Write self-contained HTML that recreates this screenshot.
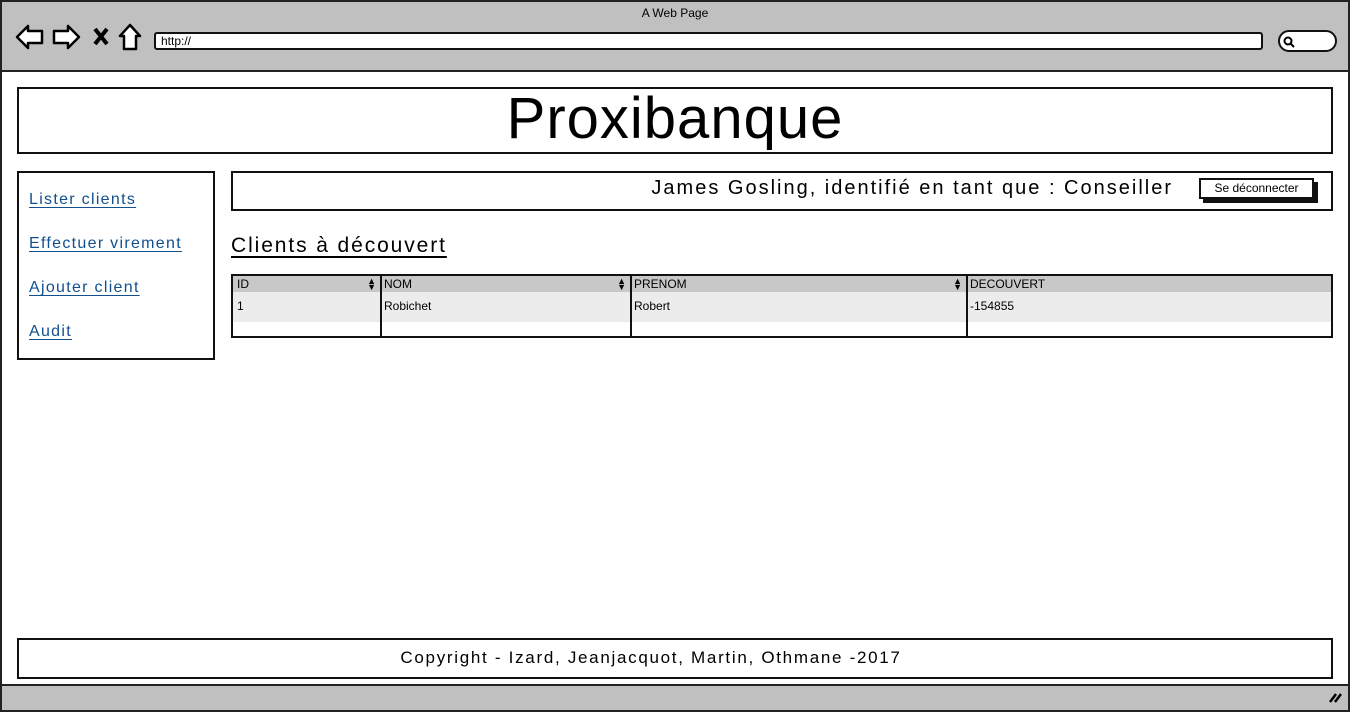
<!DOCTYPE html>
<html><head><meta charset="utf-8"><style>
*{margin:0;padding:0;box-sizing:border-box}
body{width:1350px;height:712px;overflow:hidden;background:#fff;font-family:"Liberation Sans",sans-serif;color:#000;position:relative}
.a{position:absolute}
.box{position:absolute;border:2px solid #111;background:#fff}
.lnk{position:absolute;left:29px;font-size:16px;color:#124f8f;text-decoration:underline;text-underline-offset:3px;letter-spacing:1.3px}
.th{position:absolute;top:0;height:16px;font-size:12px;line-height:16px;padding-left:5px}
.td{position:absolute;top:23px;font-size:12px;padding-left:5px}
.ar{position:absolute;right:4px;top:2px;font-size:9px;line-height:6px}
</style></head><body>
<div class="a" style="left:0;top:0;width:1350px;height:712px;border:2px solid #222"></div>
<div class="a" style="left:2px;top:2px;width:1346px;height:70px;background:#c0c0c0;border-bottom:2px solid #222"></div>
<div class="a" style="left:0;top:6px;width:1350px;text-align:center;font-size:12px">A Web Page</div>
<svg class="a" style="left:14px;top:22px" width="135" height="30" viewBox="0 0 135 30">
<path d="M3 15 L14 4 L14 9 L28 9 L28 21 L14 21 L14 26 Z" fill="#fff" stroke="#000" stroke-width="2.5" stroke-linejoin="round"/>
<path d="M65 15 L54 4 L54 9 L40 9 L40 21 L54 21 L54 26 Z" fill="#fff" stroke="#000" stroke-width="2.5" stroke-linejoin="round"/>
<path d="M81 7 L93 22 M93 7 L81 22" stroke="#000" stroke-width="4"/>
<path d="M116 3 L106 14 L110 14 L110 27 L122 27 L122 14 L126 14 Z" fill="#fff" stroke="#000" stroke-width="2.5" stroke-linejoin="round"/>
</svg>
<div class="a" style="left:154px;top:32px;width:1109px;height:18px;background:#fff;border:2px solid #111;border-radius:3px;font-size:12px;line-height:14px;padding-left:5px">http://</div>
<div class="a" style="left:1278px;top:30px;width:59px;height:22px;background:#fff;border:2px solid #111;border-radius:11px"></div>
<svg class="a" style="left:1282px;top:35px" width="14" height="14"><circle cx="6" cy="6" r="3.5" fill="none" stroke="#000" stroke-width="2"/><path d="M8 8 L12 12" stroke="#000" stroke-width="2"/></svg>
<div class="box" style="left:17px;top:87px;width:1316px;height:67px"></div>
<div class="a" style="left:0;top:85px;width:1350px;text-align:center;font-size:58px;letter-spacing:1px">Proxibanque</div>
<div class="box" style="left:17px;top:171px;width:198px;height:189px"></div>
<div class="lnk" style="top:191px">Lister clients</div>
<div class="lnk" style="top:235px">Effectuer virement</div>
<div class="lnk" style="top:279px">Ajouter client</div>
<div class="lnk" style="top:323px">Audit</div>
<div class="box" style="left:231px;top:171px;width:1102px;height:40px"></div>
<div class="a" style="left:400px;top:177px;width:773px;text-align:right;font-size:20px;letter-spacing:2px">James Gosling, identifié en tant que : Conseiller</div>
<div class="a" style="left:1203px;top:182px;width:115px;height:21px;background:#111"></div>
<div class="a" style="left:1199px;top:178px;width:115px;height:21px;background:#fff;border:2px solid #111;font-size:12px;line-height:17px;text-align:center">Se déconnecter</div>
<div class="a" style="left:231px;top:234px;font-size:21px;text-decoration:underline;text-underline-offset:4px;letter-spacing:1.9px">Clients à découvert</div>
<div class="a" style="left:231px;top:274px;width:1102px;height:64px;border:2px solid #111;background:#fff;overflow:hidden">
<div class="a" style="left:0;top:0;width:1100px;height:16px;background:#c8c8c8"></div>
<div class="a" style="left:0;top:16px;width:1100px;height:30px;background:#ececec"></div>
<div class="a" style="left:147px;top:0;width:2px;height:62px;background:#111"></div>
<div class="a" style="left:397px;top:0;width:2px;height:62px;background:#111"></div>
<div class="a" style="left:733px;top:0;width:2px;height:62px;background:#111"></div>
<div class="th" style="left:0;width:147px;padding-left:4px">ID<span class="ar">▲<br>▼</span></div>
<div class="th" style="left:149px;width:248px;padding-left:2px">NOM<span class="ar">▲<br>▼</span></div>
<div class="th" style="left:399px;width:334px;padding-left:2px">PRENOM<span class="ar">▲<br>▼</span></div>
<div class="th" style="left:735px;padding-left:2px">DECOUVERT</div>
<div class="td" style="left:0;padding-left:4px">1</div>
<div class="td" style="left:149px;padding-left:2px">Robichet</div>
<div class="td" style="left:399px;padding-left:2px">Robert</div>
<div class="td" style="left:735px;padding-left:2px">-154855</div>
</div>
<div class="box" style="left:17px;top:638px;width:1316px;height:41px"></div>
<div class="a" style="left:0;top:648px;width:1302px;text-align:center;font-size:17px;letter-spacing:1.7px">Copyright - Izard, Jeanjacquot, Martin, Othmane -2017</div>
<div class="a" style="left:2px;top:684px;width:1346px;height:26px;background:#c0c0c0;border-top:2px solid #222"></div>
<svg class="a" style="left:1328px;top:690px" width="16" height="14"><path d="M2 12 L8 4 M7 12 L13 4" stroke="#000" stroke-width="2.5"/></svg>
</body></html>
